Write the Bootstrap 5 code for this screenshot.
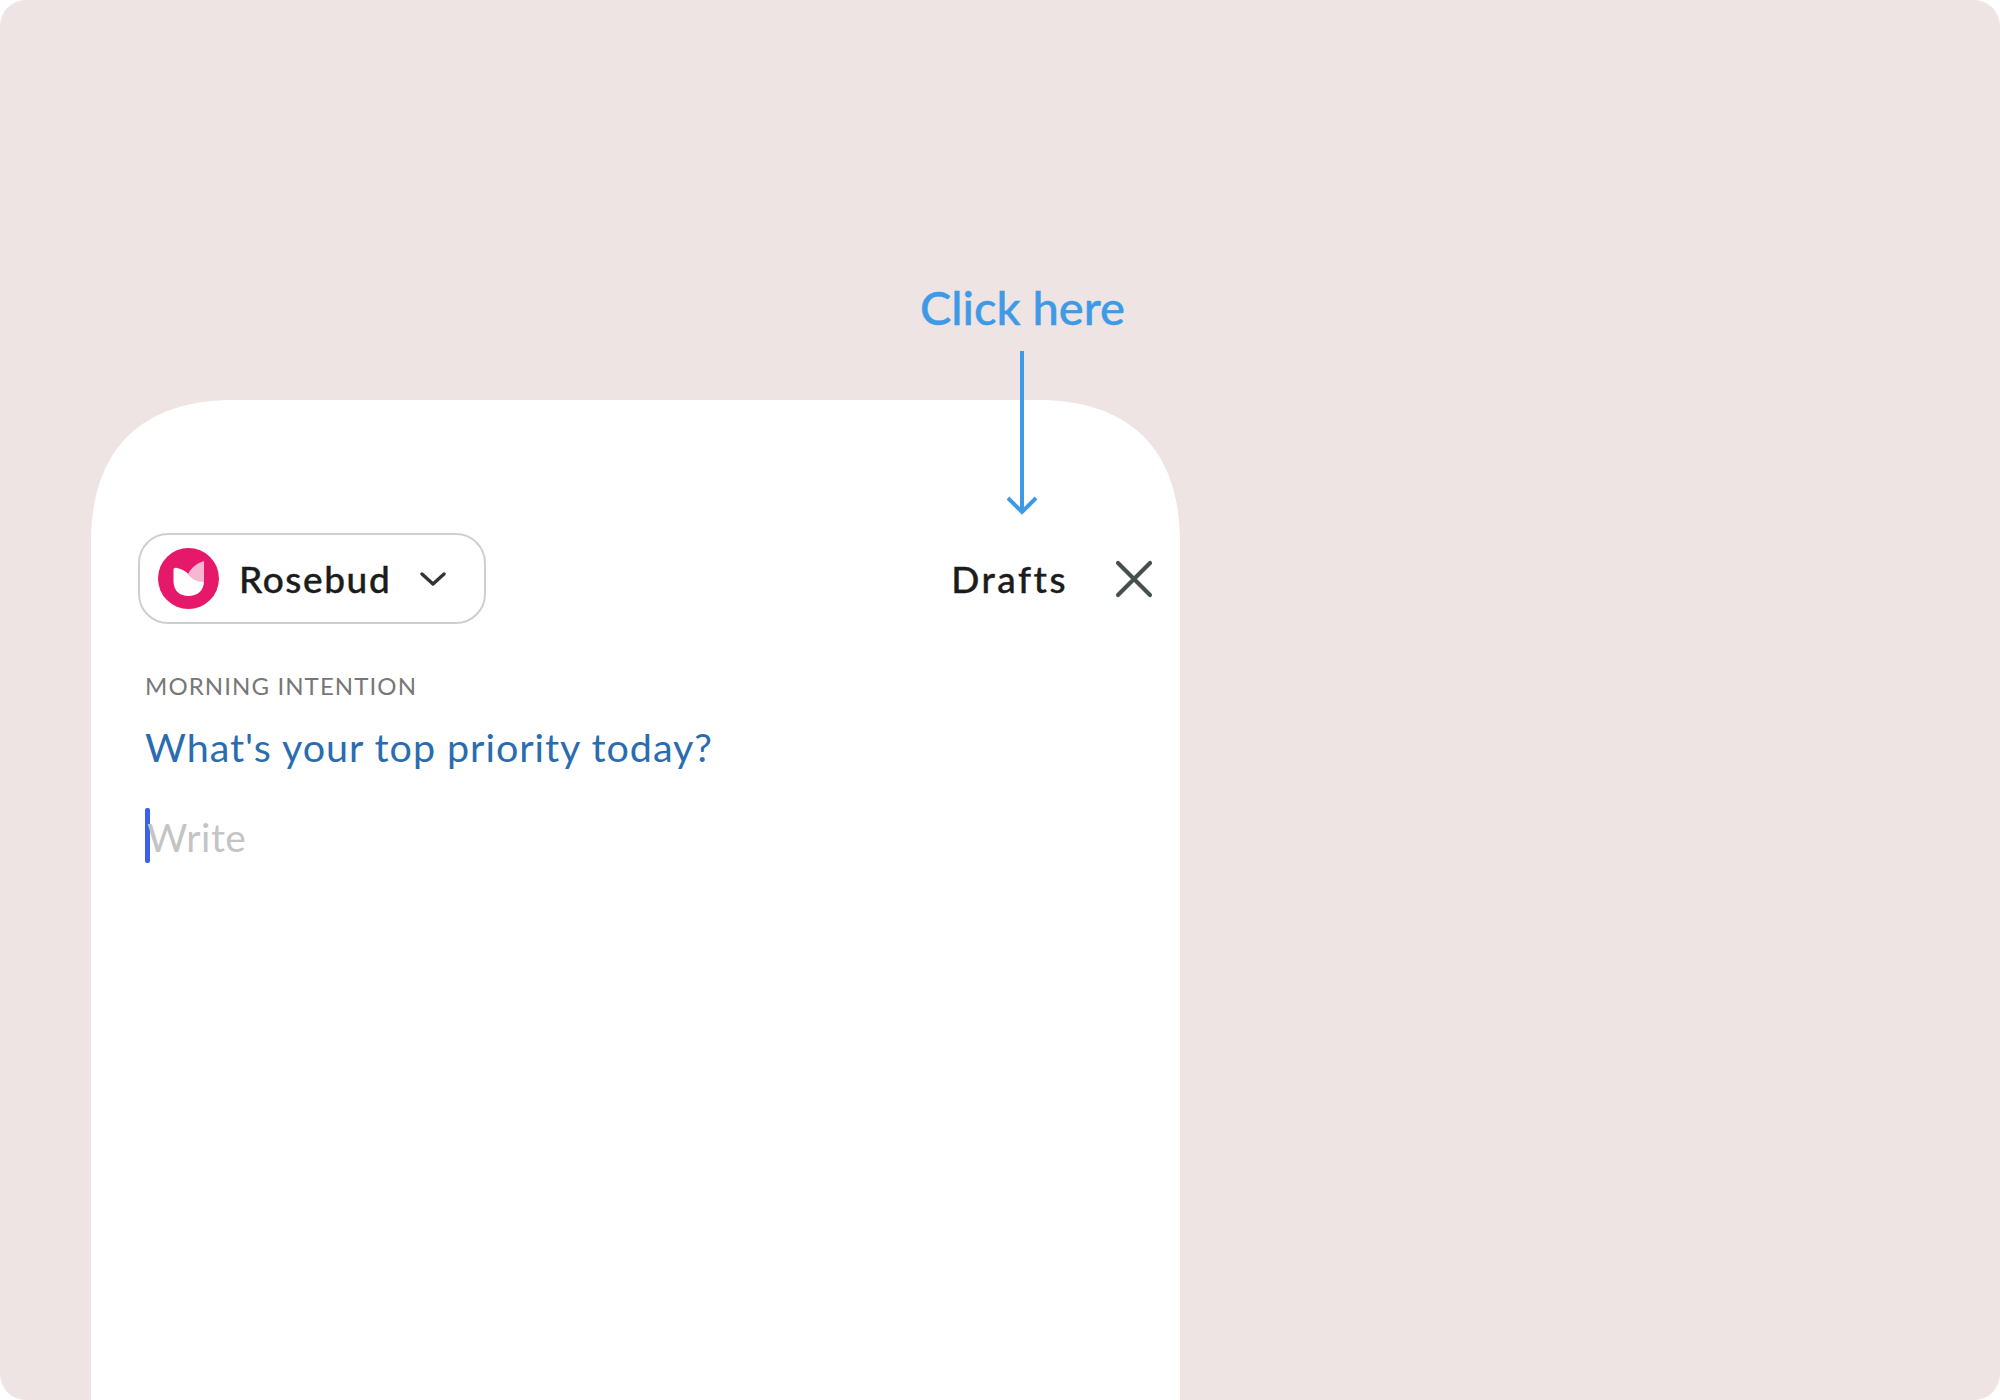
<!DOCTYPE html>
<html lang="en">
<head>
<meta charset="utf-8">
<title>Rosebud</title>
<link rel="stylesheet" href="https://cdn.jsdelivr.net/npm/bootstrap@5.3.0/dist/css/bootstrap.min.css">
<style>
html,body{margin:0;background:#fff;}
body{font-family:"Lato","Liberation Sans",sans-serif;}
.stage{width:2000px;height:1400px;background:#ede4e3;border-radius:26px;overflow:hidden;padding:400px 820px 0 91px;position:relative;}
.sheet{background:#fff;height:1000px;clip-path:path('M0 142C0 50 50 0 142 0H947C1039 0 1089 50 1089 142V1000H0Z');padding:133px 27px 0 47px;}
.journal-btn{width:348px;height:91px;border:2px solid #cfcfcf;border-radius:30px;padding:0 0 0 18px;background:#fff;color:#1c1c1c;font-size:37px;font-weight:500;letter-spacing:1.6px;gap:20px;-webkit-text-stroke:.4px #1c1c1c;}
.journal-btn .chev{margin-left:9px;}
.drafts{font-size:37px;color:#1c1c1c;letter-spacing:2.5px;font-weight:500;background:none;border:0;padding:0;-webkit-text-stroke:.4px #1c1c1c;}
.close-x{background:none;border:0;padding:0;line-height:0;margin-left:47px;}
.head-row{height:91px;}
.eyebrow{font-size:24px;line-height:30px;color:#777;letter-spacing:1.1px;margin:47px 0 0 7px;}
.question{font-size:39.5px;line-height:50px;color:#2a6cb0;letter-spacing:.95px;margin:21px 0 0 7px;}
.write-line{margin:36px 0 0 7px;height:55px;}
.caret-bar{width:5px;height:55px;background:#3d5ff0;border-radius:2px;flex:none;}
.write-ph{font-size:39px;line-height:55px;color:#c4c4c4;letter-spacing:.55px;margin-left:-3px;padding-top:2px;}
.hint{position:absolute;left:920px;top:277px;width:206px;z-index:2;}
.hint-text{font-size:47px;line-height:60px;color:#3f9ae6;font-weight:500;white-space:nowrap;-webkit-text-stroke:.4px #3f9ae6;}
.hint svg{display:block;margin:14px 0 0 85px;}
</style>
</head>
<body>
<div class="stage">
  <div class="hint d-flex flex-column">
    <div class="hint-text">Click here</div>
    <svg width="34" height="164" viewBox="0 0 34 164" fill="none" stroke="#3f9ae6" stroke-width="4"><path d="M17 0V161"/><path d="M3 147L17 161L31 147"/></svg>
  </div>
  <div class="sheet">
    <div class="head-row d-flex align-items-center">
      <button type="button" class="journal-btn btn d-flex align-items-center">
        <svg width="61" height="61" viewBox="0 0 61 61" class="flex-shrink-0">
          <circle cx="30.5" cy="30.5" r="30.5" fill="#e5186a"/>
          <path d="M15.500 22C15.500 20 17 19.500 19 20C24 21 28 23 31 27L46 20V33C46 43 39 48 30.500 48C22 48 15.500 43 15.500 33Z" fill="#fff"/>
          <path d="M30 26C33 20 39 15 46 13V34C39 34 33 31 30 26Z" fill="#f7b7d2"/>
        </svg>
        <span>Rosebud</span>
        <svg class="chev" width="26" height="16" viewBox="0 0 26 16" fill="none" stroke="#333" stroke-width="3.4" stroke-linecap="round" stroke-linejoin="round"><path d="M2 3L13 13L24 3"/></svg>
      </button>
      <button type="button" class="drafts ms-auto">Drafts</button>
      <button type="button" class="close-x" aria-label="Close">
        <svg width="38" height="38" viewBox="0 0 38 38" fill="none" stroke="#46504c" stroke-width="4.2" stroke-linecap="round"><path d="M3 3L35 35M35 3L3 35"/></svg>
      </button>
    </div>
    <div class="eyebrow">MORNING INTENTION</div>
    <div class="question">What's your top priority today?</div>
    <div class="write-line d-flex">
      <span class="caret-bar"></span><span class="write-ph">Write</span>
    </div>
  </div>
</div>
<script src="https://cdn.jsdelivr.net/npm/bootstrap@5.3.0/dist/js/bootstrap.bundle.min.js"></script>
</body>
</html>
